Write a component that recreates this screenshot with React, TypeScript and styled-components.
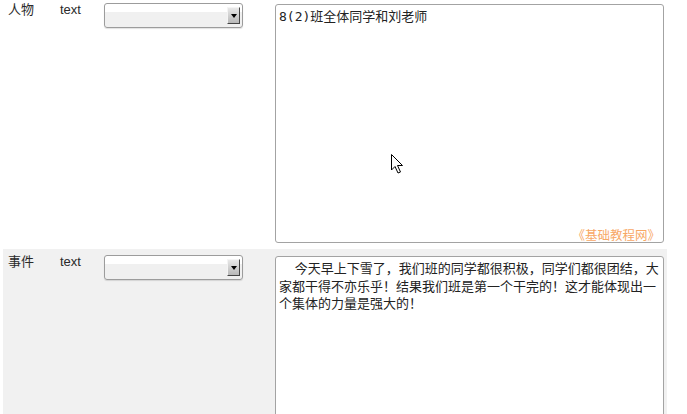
import React from "react";
import styled, { createGlobalStyle } from "styled-components";

const Global = createGlobalStyle`
  html, body { margin: 0; padding: 0; background: #ffffff; }
  body { font-family: "Liberation Sans", "Noto Sans CJK SC", sans-serif; color: #222; overflow: hidden; }
`;

const Page = styled.div`
  width: 687px;
  height: 414px;
  overflow: hidden;
  position: relative;
`;

const Table = styled.div`
  display: flex;
  flex-direction: column;
  padding-left: 3px;
  margin-top: -3px;
`;

const Row = styled.div<{ $alt?: boolean }>`
  display: grid;
  grid-template-columns: 52px 44px 139px 32px 389px;
  align-items: start;
  width: 664px;
  box-sizing: border-box;
  padding: 6px 3px 6px 5px;
  background: ${(p) => (p.$alt ? "#f1f1f1" : "#ffffff")};
`;

const Label = styled.div`
  font-size: 13px;
  line-height: 14px;
  padding-top: 0;
  color: #2a2a2a;
`;

const TypeCell = styled(Label)`
  grid-column: 2;
`;

const SelectBox = styled.div`
  grid-column: 3;
  height: 25px;
  box-sizing: border-box;
  border: 1px solid #9c9c9c;
  border-radius: 3px;
  background: linear-gradient(#ffffff 0, #ffffff 8px, #f0f0f0 8px, #f0f0f0 100%);
  box-shadow: 0 1px 1px rgba(0, 0, 0, 0.12);
  display: flex;
  justify-content: flex-end;
  align-items: center;
  padding-right: 2px;
`;

const ArrowButton = styled.span`
  width: 13px;
  height: 17px;
  box-sizing: border-box;
  border-right: 1px solid #444;
  border-bottom: 1px solid #444;
  border-top: 1px solid #f4f4f4;
  border-left: 1px solid #f4f4f4;
  background: linear-gradient(#e8e8e8, #b8b8b8);
  display: flex;
  align-items: center;
  justify-content: center;
  &::after {
    content: "";
    width: 0;
    height: 0;
    border-left: 3px solid transparent;
    border-right: 3px solid transparent;
    border-top: 4px solid #000;
    margin-top: 1px;
  }
`;

const AreaCell = styled.div`
  grid-column: 5;
  position: relative;
  margin-top: 1px;
`;

const TextArea = styled.textarea`
  display: block;
  width: 389px;
  height: 239px;
  box-sizing: border-box;
  margin: 0;
  border: 1px solid #a3a3a3;
  border-radius: 3px;
  background: #ffffff;
  padding: 3px 0 3px 3px;
  resize: none;
  overflow: hidden;
  font-family: "DejaVu Sans Mono", "Noto Sans CJK SC", monospace;
  font-size: 13px;
  line-height: 17.5px;
  color: #222;
  outline: none;
`;

const Watermark = styled.span`
  position: absolute;
  right: 4px;
  bottom: 1px;
  font-family: "Noto Sans CJK SC", sans-serif;
  font-size: 12.5px;
  line-height: 14px;
  color: #f8a866;
  pointer-events: none;
`;

const Cursor = styled.svg`
  position: absolute;
  left: 115px;
  top: 149px;
`;

const rows = [
  {
    name: "人物",
    type: "text",
    value: "8(2)班全体同学和刘老师",
    mark: true,
  },
  {
    name: "事件",
    type: "text",
    value:
      "  今天早上下雪了，我们班的同学都很积极，同学们都很团结，大家都干得不亦乐乎！结果我们班是第一个干完的！这才能体现出一个集体的力量是强大的！",
    mark: false,
  },
];

export default function App() {
  return (
    <Page>
      <Global />
      <Table>
        {rows.map((r, i) => (
          <Row key={r.name} $alt={i % 2 === 1}>
            <Label>{r.name}</Label>
            <TypeCell>{r.type}</TypeCell>
            <SelectBox>
              <ArrowButton />
            </SelectBox>
            <AreaCell>
              <TextArea readOnly defaultValue={r.value} />
              {r.mark && <Watermark>《基础教程网》</Watermark>}
              {r.mark && (
                <Cursor width="14" height="22" viewBox="0 0 14 22">
                  <path
                    d="M1.5 1.5 L1.5 17 L5 13.5 L8 20 L10.5 19 L7.5 12.5 L12.5 12.5 Z"
                    fill="#ffffff"
                    stroke="#000000"
                    strokeWidth="1"
                    strokeLinejoin="miter"
                  />
                </Cursor>
              )}
            </AreaCell>
          </Row>
        ))}
      </Table>
    </Page>
  );
}
